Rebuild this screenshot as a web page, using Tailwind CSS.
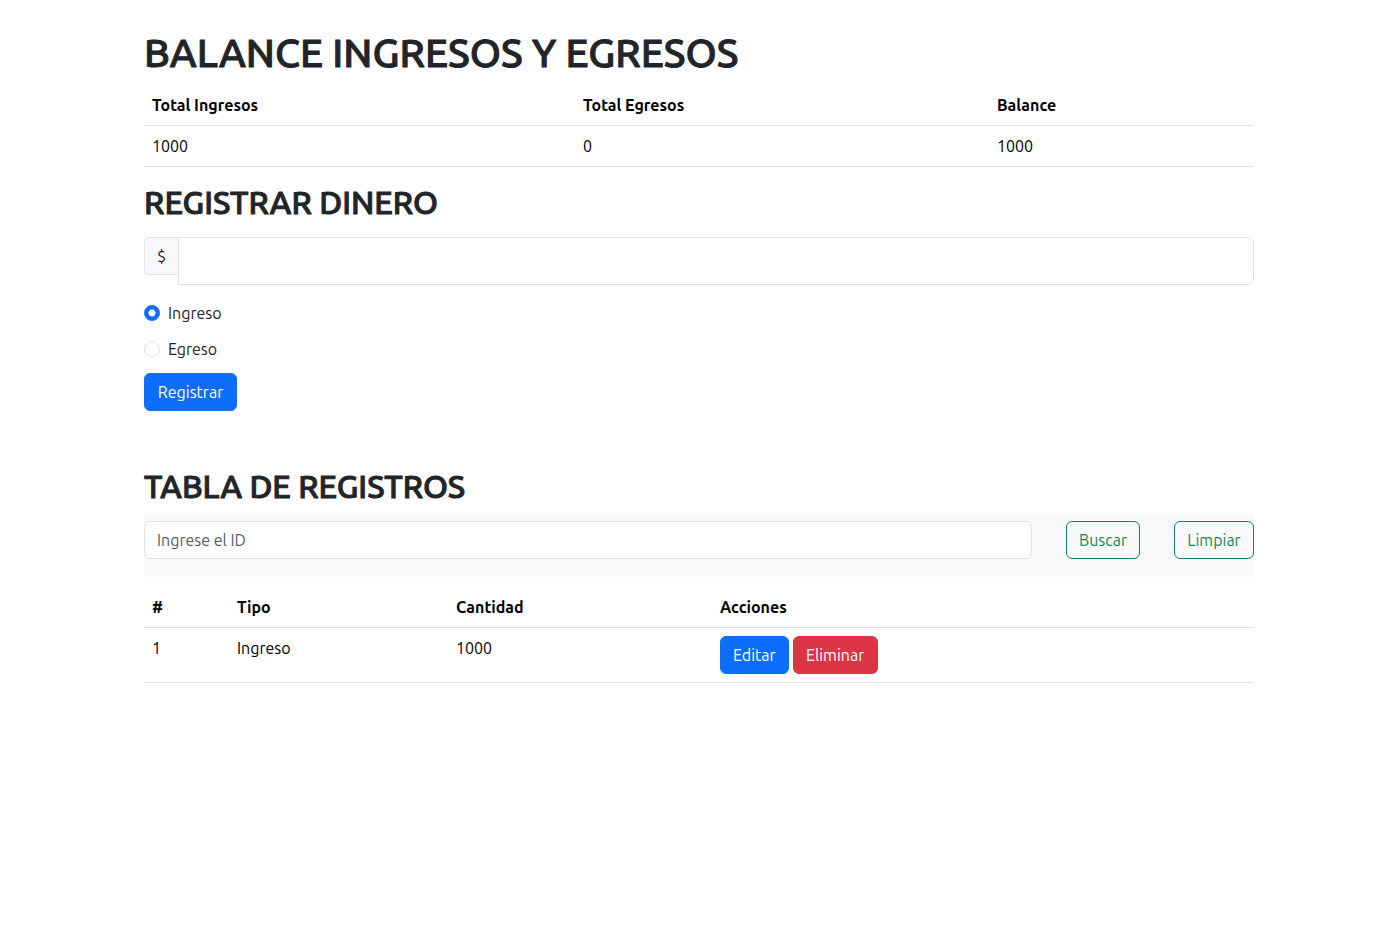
<!DOCTYPE html>
<html lang="es">
<head>
<meta charset="utf-8">
<meta name="viewport" content="width=device-width, initial-scale=1">
<title>Balance ingresos y egresos</title>
<script src="https://cdn.jsdelivr.net/npm/@tailwindcss/browser@4"></script>
</head>
<body class="bg-white pl-0.5 font-['Ubuntu','Open_Sans','Noto_Sans',sans-serif] text-base text-[#212529]">
<main class="mx-auto max-w-[1110px] pt-[29px]">
  <h1 class="mb-2 text-[40px] leading-12 font-medium [-webkit-text-stroke:1px_#212529]">BALANCE INGRESOS Y EGRESOS</h1>
  <table class="mb-4 w-full table-fixed border-collapse text-left text-black">
    <colgroup><col class="w-[431px]"><col class="w-[414px]"><col></colgroup>
    <thead><tr class="border-b border-[#dee2e6]">
      <th class="p-2 font-bold">Total Ingresos</th><th class="p-2 font-bold">Total Egresos</th><th class="p-2 font-bold">Balance</th>
    </tr></thead>
    <tbody><tr class="border-b border-[#dee2e6]">
      <td class="p-2">1000</td><td class="p-2">0</td><td class="p-2">1000</td>
    </tr></tbody>
  </table>
  <form>
    <h2 class="mb-4 text-[32px] leading-[38px] font-medium [-webkit-text-stroke:1px_#212529]">REGISTRAR DINERO</h2>
    <div class="flex items-start">
      <label for="monto" class="rounded-l-md border border-r-0 border-[#dee2e6] bg-[#f8f9fa] px-3 py-[6px]">$</label>
      <input id="monto" type="text" class="h-12 min-w-0 flex-1 rounded-r-md border border-[#dee2e6] px-3">
    </div>
    <div class="mt-4 mb-3 flex items-center gap-2">
      <input id="ingreso" type="radio" name="tipo" checked class="size-4 appearance-none rounded-full border border-[#dee2e6] checked:border-[#0d6efd] checked:bg-[radial-gradient(circle,#fff_3px,#0d6efd_4px)]">
      <label for="ingreso">Ingreso</label>
    </div>
    <div class="mb-3 flex items-center gap-2">
      <input id="egreso" type="radio" name="tipo" class="size-4 appearance-none rounded-full border border-[#dee2e6] checked:border-[#0d6efd] checked:bg-[radial-gradient(circle,#fff_3px,#0d6efd_4px)]">
      <label for="egreso">Egreso</label>
    </div>
    <button type="button" class="min-w-[93px] rounded-md border border-[#0d6efd] bg-[#0d6efd] px-3 py-[6px] text-white">Registrar</button>
  </form>
  <section class="mt-14">
    <h2 class="mb-2 text-[32px] leading-[38px] font-medium [-webkit-text-stroke:1px_#212529]">TABLA DE REGISTROS</h2>
    <form class="mb-[10px] flex items-start gap-[34px] bg-[#f8f9fa] pt-2 pb-[18px]">
      <input type="search" aria-label="Ingrese el ID" placeholder="Ingrese el ID" class="h-[38px] min-w-0 flex-1 rounded-md border border-[#dee2e6] bg-white px-3 placeholder:text-[#595c5f]">
      <button type="button" class="min-w-[74px] rounded-md border border-[#198754] px-3 py-[6px] text-[#198754]">Buscar</button>
      <button type="button" class="min-w-20 rounded-md border border-[#198754] px-3 py-[6px] text-[#198754]">Limpiar</button>
    </form>
    <table class="w-full table-fixed border-collapse text-left text-black">
      <colgroup><col class="w-[85px]"><col class="w-[219px]"><col class="w-[264px]"><col></colgroup>
      <thead><tr class="border-b border-[#dee2e6]">
        <th class="p-2 font-bold">#</th><th class="p-2 font-bold">Tipo</th><th class="p-2 font-bold">Cantidad</th><th class="p-2 font-bold">Acciones</th>
      </tr></thead>
      <tbody><tr class="border-b border-[#dee2e6] align-top">
        <td class="p-2">1</td><td class="p-2">Ingreso</td><td class="p-2">1000</td>
        <td class="p-2"><div class="flex gap-1">
          <button type="button" class="rounded-md border border-[#0d6efd] bg-[#0d6efd] px-3 py-[6px] text-white">Editar</button>
          <button type="button" class="min-w-[85px] rounded-md border border-[#dc3545] bg-[#dc3545] px-3 py-[6px] text-white">Eliminar</button>
        </div></td>
      </tr></tbody>
    </table>
  </section>
</main>
</body>
</html>
